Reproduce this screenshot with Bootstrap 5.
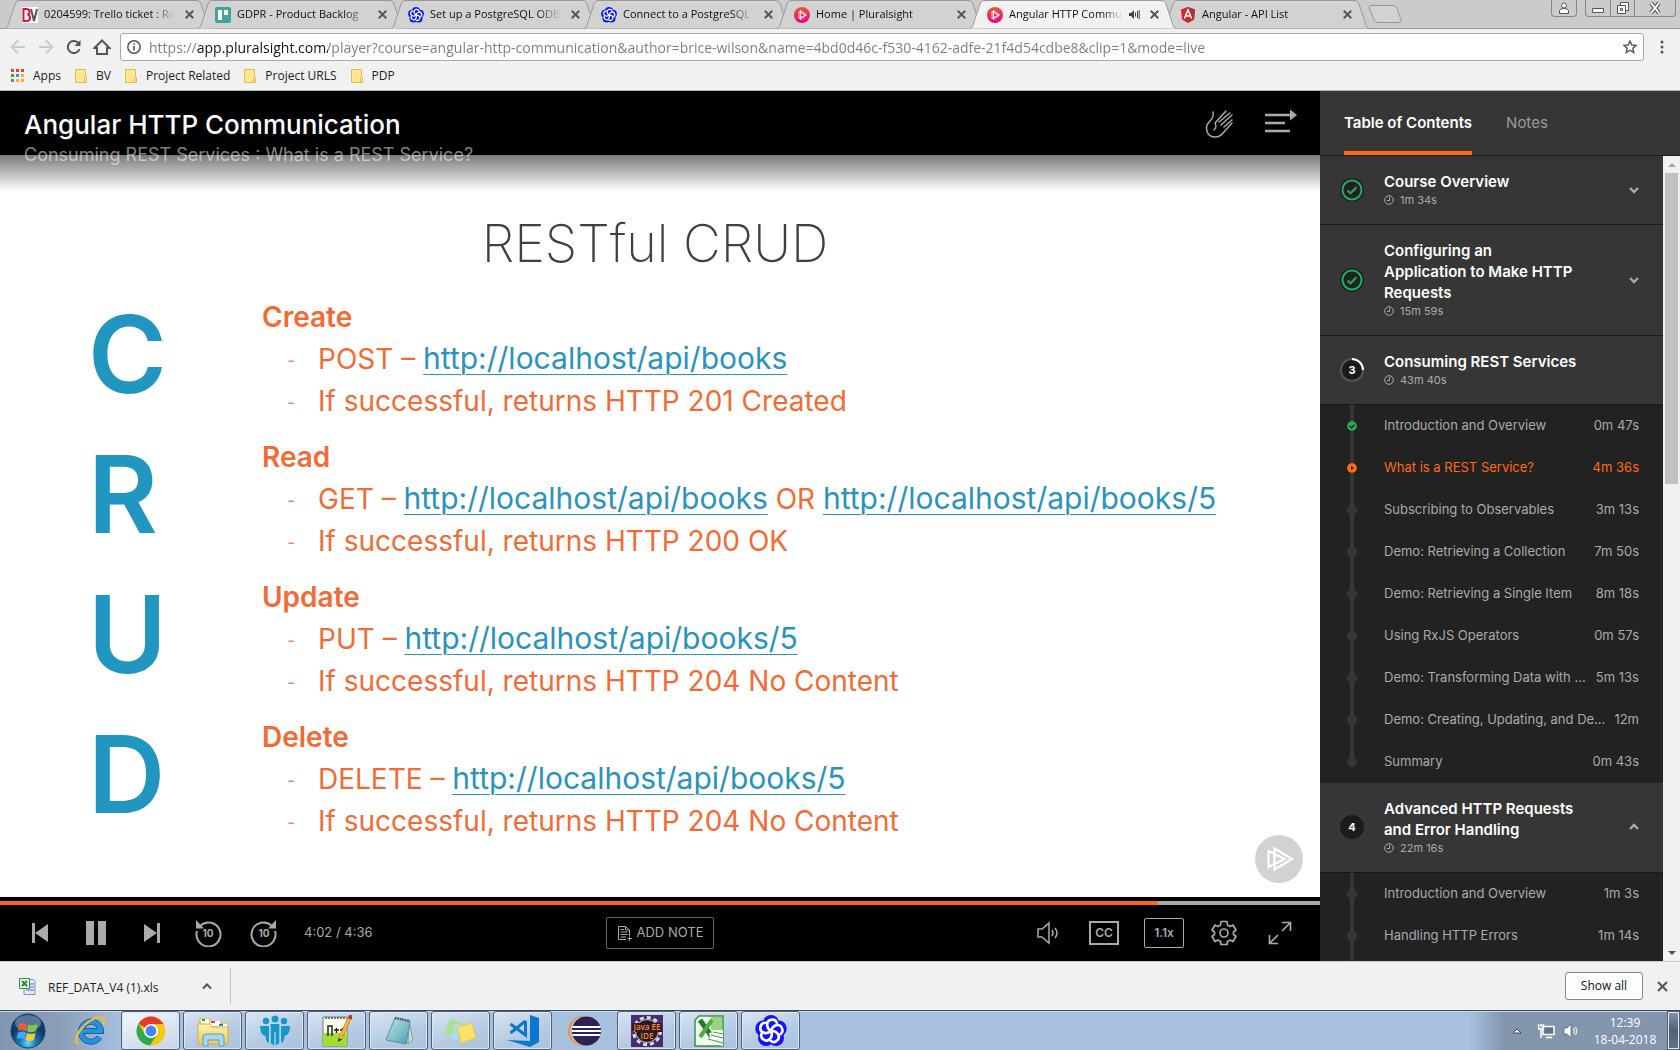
<!DOCTYPE html>
<html lang="en">
<head>
<meta charset="utf-8">
<meta name="viewport" content="width=device-width, initial-scale=1">
<title>Angular HTTP Communication</title>
<link href="https://cdn.jsdelivr.net/npm/bootstrap@5.3.0/dist/css/bootstrap.min.css" rel="stylesheet">
<style>
body{font-family:Inter,"Open Sans",sans-serif;height:100vh;overflow:hidden;font-size:13px;color:#aaa;background:#f1f1f1}
button{background:none;border:0;padding:0;color:inherit;display:inline-flex;align-items:center;justify-content:center}
svg{display:block;flex:none}
.chrome-ui{font-family:"Open Sans","Noto Sans",sans-serif;font-size:12px;color:#222}
/* tab strip */
.tab-strip{height:29px;background:#cbcbcb;border-bottom:1px solid #999;padding-left:5px}
.browser-tab{width:206px;height:29px;margin-right:-13px;position:relative;padding:0 14px 0 17px;color:#111;text-decoration:none;gap:6px;font-size:11px}
.browser-tab>.tab-shape{position:absolute;left:0;top:0;width:100%;height:29px;fill:#d2d2d2;stroke:#999}
.browser-tab>*{position:relative}
.tab-current{z-index:2;margin-bottom:-1px}
.tab-current>.tab-shape{fill:#f1f1f1}
.tab-text{flex:1 1 0;white-space:nowrap;overflow:hidden;-webkit-mask-image:linear-gradient(90deg,#000 82%,transparent)}
.tab-x{width:16px;color:#555}
.win-btns{height:17px;border:1px solid #888;border-top:0;border-radius:0 0 4px 4px;color:#555}
.win-btns button{height:16px;width:24px}
.win-btns .win-close{width:41px}
.win-btns button+button{border-left:1px solid #888}
/* toolbar */
.tool-row{height:36px;padding:0 12px 0 4px;color:#555}
.tool-row>button{width:28px;height:28px}
.url-box{height:28px;background:#fff;border:1px solid #a9a9a9;border-radius:3px;padding:0 6px}
.url-box input{border:0;outline:0;padding:0;font-size:14px;min-width:0;line-height:24px;height:26px;color:transparent;background:linear-gradient(90deg,#7b7b7b 48px,#111 48px,#111 179px,#7b7b7b 179px);-webkit-background-clip:text;background-clip:text}
.bookmark-row{height:26px;border-bottom:1px solid #b6b6b6;padding-left:10px;gap:14px}
.bookmark-row a{color:#222;text-decoration:none;gap:9px}
/* player */
.player-head{height:64px;background:#000;padding:18px 22px 0 24px;z-index:3;position:relative}
.player-head h1{font-size:26px;font-weight:500;line-height:32px;color:#fff;margin:0}
.player-head p{font-size:18px;line-height:28px;color:rgba(255,255,255,.52);margin:0;white-space:nowrap}
.slide-area{background:linear-gradient(#7a7a7a,#fff 36px);overflow:hidden;padding:56px 24px 0 88px;color:#f26b35}
.slide-area h2{font-size:52px;font-weight:200;line-height:66px;color:#404040;margin:0 0 19px;padding-right:74px}
.crud-block{height:126px;margin-bottom:14px}
.crud-letter{width:174px;font-size:107px;font-weight:600;line-height:116px;color:#2196c1}
.crud-block h3,.crud-block li{font-size:28px;line-height:42px;margin:0;white-space:nowrap}
.crud-block h3{font-weight:600}
.crud-block li{display:flex;height:42px}
.crud-block li::before{content:"-";font-size:18px;width:31px;padding-top:2px;color:#e8905f}
.crud-block ul{list-style:none;margin:0;padding-left:25px}
.crud-block a{color:#2a93bb;font-size:30px;line-height:1;text-decoration-thickness:1px;text-underline-offset:5px}
.ps-badge{position:absolute;right:17px;bottom:14px}
.seek{height:8px;background:#000;padding-top:4px}
.seek>div{height:4px;background:#aaa}
.seek>div>div{height:4px;background:#f96816}
.ctl-bar{height:56px;background:#000;color:#aaa;padding:0 24px}
.ctl-bar .ctl{width:32px;height:32px}
.note-btn{height:32px;width:108px;border:1px solid #666;border-radius:2px;gap:4px;font-size:13px;white-space:nowrap}
.ctl-bar .speed{width:40px;height:30px;border:1px solid #aaa;border-radius:2px;font-size:12px}
.side-a,.side-b{flex:1 1 0}
/* contents panel */
.toc{width:360px;background:#363636}
.toc-tabs{height:65px;border-bottom:1px solid #191919;padding-left:24px;gap:34px;font-size:15px}
.toc-tabs a{line-height:63px;height:64px;color:#999;text-decoration:none}
.toc-tabs a.cur{color:#fff;font-weight:600;border-bottom:4px solid #ff6a13}
.toc-body{min-height:0}
.toc-list{overflow:hidden;min-width:0}
.module{padding:15px 24px 16px 20px;border-bottom:1px solid #191919;background:#363636;color:#aaa}
.module h4{font-size:15px;font-weight:600;line-height:21px;color:#fff;margin:0}
.module .dur{font-size:11px;line-height:16px;gap:6px}
.module .num{width:24px;height:24px;border-radius:50%;background:#1c1c1c;color:#fff;font-size:11px;font-weight:700;margin-right:20px}
.lessons{background:#222;list-style:none;margin:0;padding:0 24px 0 27px}
.lessons li{height:42px;gap:5px;background:linear-gradient(#363636,#363636) 3px 0/4px 100% no-repeat}
.lessons li.final{background-size:4px 50%}
.lessons .dot{width:10px;height:10px;border-radius:50%;background:#363636;flex:none;margin-right:22px}
.lessons a{color:#aaa;text-decoration:none;flex:1 1 0;min-width:0}
.lessons .now,.lessons .now a{color:#ff6a13}
.track{width:17px;background:#f1f1f1}
.track i{height:17px}
.thumb{height:311px;width:13px;background:#c1c1c1}
/* download shelf and taskbar */
.shelf{height:49px;border-top:1px solid #ccc;background:#f1f1f1;padding:0 10px 0 19px}
.shelf-file{width:212px;height:36px;border-right:1px solid #c4c4c4;padding-right:18px}
.show-all{width:78px;height:28px;border:1px solid #888;border-radius:3px;background:#fdfdfd;color:#111}
.task{height:40px;background:linear-gradient(90deg,#8396b1,#8b9eb9 58px,#a6c0dd 122px,#a6c0dd calc(100% - 210px),#8396ae calc(100% - 176px));border-top:1px solid #3d4a5c;box-shadow:inset 0 1px #c4d5e8;padding-left:6px;gap:3px}
.task button{width:59px;height:39px;border:1px solid #4f6078;border-radius:3px;background:linear-gradient(160deg,#d9e5f2,#b5cae2 60%,#aac2de);box-shadow:inset 0 0 0 1px #dbe7f4}
.task button.open-app{background:linear-gradient(160deg,#f4f8fc,#d6e2f0 60%,#c4d5e9)}
.task button.plain{background:none;border-color:transparent;box-shadow:none}
.task .orb{width:43px}.task .ie{width:66px;padding-left:10px}
.task .corner{width:13px;background:linear-gradient(#8796aa,#4f6075 50%,#63738a);border-radius:0}
.clock{color:#fff;font-size:12px;line-height:17px;width:84px}
</style>
</head>
<body class="d-flex flex-column">
<svg width="0" height="0" class="position-absolute" aria-hidden="true">
<defs>
<linearGradient id="gp" x1="0" y1="0" x2="0" y2="1"><stop offset="0" stop-color="#f05a28"/><stop offset="1" stop-color="#ec008c"/></linearGradient>
<linearGradient id="gf" x1="0" y1="0" x2="0" y2="1"><stop offset="0" stop-color="#fff3b0"/><stop offset="1" stop-color="#eec858"/></linearGradient>
<linearGradient id="gn" x1="0" y1="0" x2="1" y2="1"><stop offset="0" stop-color="#bfe6ee"/><stop offset="1" stop-color="#4f9fb2"/></linearGradient>
<radialGradient id="go" cx=".5" cy=".85"><stop offset="0" stop-color="#5fe3fb"/><stop offset=".45" stop-color="#1c7cba"/><stop offset="1" stop-color="#0f3c6e"/></radialGradient>
<symbol id="shape" viewBox="0 0 206 29" preserveAspectRatio="none"><path d="M0 28.500C3 27 3 25 4 22L10 4Q11 .5 14 .5H192Q195 .5 196 4L202 22C203 25 203 27 206 28.500"/></symbol>
<symbol id="x" viewBox="0 0 16 16"><path d="M4 4l8 8M12 4l-8 8" stroke="currentColor" stroke-width="2"/></symbol>
<symbol id="knot" viewBox="0 0 32 32"><g fill="#1414f5"><circle cx="16" cy="8" r="8"/><circle cx="8.300" cy="13.500" r="8"/><circle cx="23.700" cy="13.500" r="8"/><circle cx="11" cy="23" r="8"/><circle cx="21" cy="23" r="8"/></g><g fill="none" stroke="#fff" stroke-width="2.600" stroke-linecap="round"><path id="kp" d="M16 16c-5-3-5-9-1-11 4-1 6 0 7 3"/><use href="#kp" transform="rotate(72 16 16)"/><use href="#kp" transform="rotate(144 16 16)"/><use href="#kp" transform="rotate(216 16 16)"/><use href="#kp" transform="rotate(288 16 16)"/></g></symbol>
<symbol id="ps" viewBox="0 0 16 16"><circle cx="8" cy="8" r="8" fill="url(#gp)"/><path d="M5 4.500v7l6.500-3.500zM6.500 3.500v9l6-4.500z" fill="none" stroke="#fff" stroke-width=".9"/></symbol>
<symbol id="folder" viewBox="0 0 12 14"><path d="M.5.5h10v8h1v5H.5z" fill="#ffe695" stroke="#e3bd4e"/><path d="M9.500 9v4.500" stroke="#e3bd4e"/></symbol>
<symbol id="clk" viewBox="0 0 10 10"><circle cx="5" cy="5" r="4.300" fill="none" stroke="currentColor"/><path d="M5.500 2v3.500H3" fill="none" stroke="currentColor"/></symbol>
<symbol id="done" viewBox="0 0 24 24"><circle cx="12" cy="12" r="12" fill="#222"/><circle cx="12" cy="12" r="9.500" fill="none" stroke="#23aa5a" stroke-width="2"/><path d="M7.500 12.500l3 2.800 6-6" fill="none" stroke="#23aa5a" stroke-width="2"/></symbol>
<symbol id="dn" viewBox="0 0 10 10"><path d="M1 3L5 7 9 3" fill="none" stroke="#aaa" stroke-width="2.400"/></symbol>
<symbol id="rew" viewBox="0 0 28 28"><path d="M6.500 5.500A12 12 0 1 1 3 11" transform="translate(0 1)" fill="none" stroke="currentColor" stroke-width="2"/><path d="M2 1v8.500h8z" fill="currentColor"/></symbol>
</defs></svg>

<header class="chrome-ui flex-shrink-0">
<div class="tab-strip d-flex">
<a href="#" class="browser-tab d-flex align-items-center"><svg class="tab-shape"><use href="#shape"/></svg><svg width="16" height="16" viewBox="0 0 16 16"><path fill="#fff" d="M0 0h16v16H0z"/><path d="M1.500 2h3q3 0 3 3 0 2-2 2.500Q8 8 8 11q0 3-3.500 3h-3z" fill="none" stroke="#d8143c" stroke-width="2"/><path d="M9 2l3 12 3-12" fill="none" stroke="#555" stroke-width="2"/></svg><span class="tab-text">0204599: Trello ticket : Re</span><button class="tab-x" aria-label="Close tab"><svg width="15" height="15"><use href="#x"/></svg></button></a>
<a href="#" class="browser-tab d-flex align-items-center"><svg class="tab-shape"><use href="#shape"/></svg><svg width="16" height="16" viewBox="0 0 16 16"><rect width="16" height="16" rx="2" fill="#3fa598"/><path d="M3 3h4v10H3zM9 3h4v5H9z" fill="#fff"/></svg><span class="tab-text">GDPR - Product Backlog</span><button class="tab-x" aria-label="Close tab"><svg width="15" height="15"><use href="#x"/></svg></button></a>
<a href="#" class="browser-tab d-flex align-items-center"><svg class="tab-shape"><use href="#shape"/></svg><svg width="16" height="16"><use href="#knot"/></svg><span class="tab-text">Set up a PostgreSQL ODB</span><button class="tab-x" aria-label="Close tab"><svg width="15" height="15"><use href="#x"/></svg></button></a>
<a href="#" class="browser-tab d-flex align-items-center"><svg class="tab-shape"><use href="#shape"/></svg><svg width="16" height="16"><use href="#knot"/></svg><span class="tab-text">Connect to a PostgreSQL</span><button class="tab-x" aria-label="Close tab"><svg width="15" height="15"><use href="#x"/></svg></button></a>
<a href="#" class="browser-tab d-flex align-items-center"><svg class="tab-shape"><use href="#shape"/></svg><svg width="16" height="16"><use href="#ps"/></svg><span class="tab-text">Home | Pluralsight</span><button class="tab-x" aria-label="Close tab"><svg width="15" height="15"><use href="#x"/></svg></button></a>
<a href="#" class="browser-tab tab-current d-flex align-items-center"><svg class="tab-shape"><use href="#shape"/></svg><svg width="16" height="16"><use href="#ps"/></svg><span class="tab-text">Angular HTTP Commu</span><svg width="11" height="11" viewBox="0 0 11 11"><path d="M0 4h2l3-3v9L2 7H0z" fill="#444"/><path d="M6.500 3.500v4M8.500 2v7M10.200 1v9" stroke="#444" fill="none"/></svg><button class="tab-x" aria-label="Close tab"><svg width="15" height="15"><use href="#x"/></svg></button></a>
<a href="#" class="browser-tab d-flex align-items-center"><svg class="tab-shape"><use href="#shape"/></svg><svg width="16" height="16" viewBox="0 0 16 16"><path d="M8 0l7 2.500-1 10L8 16l-6-3.500-1-10z" fill="#d4232c"/><path d="M8 0l7 2.500-1 10L8 16z" fill="#b52e31"/><path d="M4.300 11.500L8 3l3.700 8.500M6 9h4" fill="none" stroke="#fff" stroke-width="1.500"/></svg><span class="tab-text">Angular - API List</span><button class="tab-x" aria-label="Close tab"><svg width="15" height="15"><use href="#x"/></svg></button></a>
<button class="align-self-center ms-2 ps-1" aria-label="New tab"><svg width="35" height="18" viewBox="0 0 35 18"><path d="M3 .5h22q3 0 4 3l4 11q.5 3-2 3H10q-3 0-4-3l-5-12q0-2 2-2z" fill="#d2d2d2" stroke="#999"/></svg></button>
<div class="ms-auto me-1 d-flex align-items-start gap-2">
<div class="win-btns d-flex"><button aria-label="Profile"><svg width="10" height="12" viewBox="0 0 10 12"><circle cx="5" cy="3.500" r="2.500" fill="#fff" stroke="#555"/><path d="M.5 11.500v-3Q1 6.500 5 6.500t4.500 2v3z" fill="#fff" stroke="#555"/></svg></button></div>
<div class="win-btns d-flex"><button aria-label="Minimise"><svg width="12" height="12" viewBox="0 0 12 12"><path d="M.5 6.500h11v4H.5z" fill="#fff" stroke="#555"/></svg></button><button aria-label="Restore"><svg width="12" height="12" viewBox="0 0 12 12"><path d="M3.500.5h8v8h-8z" fill="#fff" stroke="#555"/><path d="M.5 3.500h8v8h-8z" fill="#fff" stroke="#555"/><path d="M3.500 6.500h2v2h-2z" fill="none" stroke="#555"/></svg></button><button class="win-close" aria-label="Close"><svg width="12" height="12" viewBox="0 0 12 12"><path d="M2 1l8 10M10 1L2 11" stroke="#555" stroke-width="4"/><path d="M2 1l8 10M10 1L2 11" stroke="#fff" stroke-width="2"/></svg></button></div>
</div>
</div>
<div class="tool-row d-flex align-items-center">
<button aria-label="Back"><svg width="16" height="16" viewBox="0 0 16 16" fill="none" stroke="#ccc" stroke-width="2"><path d="M15 8H2M8 1.500L1.500 8 8 14.500"/></svg></button>
<button aria-label="Forward"><svg width="16" height="16" viewBox="0 0 16 16" fill="none" stroke="#ccc" stroke-width="2"><path d="M1 8h13M8 1.500L14.500 8 8 14.500"/></svg></button>
<button aria-label="Reload"><svg width="16" height="16" viewBox="0 0 16 16"><path d="M13.500 10A6 6 0 1 1 12 3.800" fill="none" stroke="#555" stroke-width="2"/><path d="M14.500 1v6h-6z" fill="#555"/></svg></button>
<button aria-label="Home"><svg width="18" height="16" viewBox="0 0 18 16"><path d="M1.500 9L9 1.500 16.500 9H14v6H4V9z" fill="none" stroke="#555" stroke-width="2"/></svg></button>
<div class="url-box d-flex align-items-center flex-grow-1 gap-2 mx-1">
<svg width="14" height="14" viewBox="0 0 14 14"><circle cx="7" cy="7" r="6.200" fill="none" stroke="#555" stroke-width="1.500"/><path d="M7 6v4.500M7 3.200v1.600" stroke="#555" stroke-width="1.600"/></svg>
<input class="flex-grow-1" type="text" aria-label="Address" value="https://app.pluralsight.com/player?course=angular-http-communication&amp;author=brice-wilson&amp;name=4bd0d46c-f530-4162-adfe-21f4d54cdbe8&amp;clip=1&amp;mode=live">
<svg width="14" height="14" viewBox="0 0 14 14"><path d="M7 1l1.800 4 4.200.4-3.200 2.800 1 4.300L7 10.200l-3.800 2.300 1-4.300L1 5.400 5.200 5z" fill="none" stroke="#555" stroke-width="1.400"/></svg>
</div>
<button class="w-auto ms-2 px-1" aria-label="Menu"><svg width="4" height="14" viewBox="0 0 4 14" fill="#555"><circle cx="2" cy="2" r="1.500"/><circle cx="2" cy="7" r="1.500"/><circle cx="2" cy="12" r="1.500"/></svg></button>
</div>
<nav class="bookmark-row d-flex pb-1" aria-label="Bookmarks">
<a href="#" class="d-flex align-items-center"><svg width="14" height="14" viewBox="0 0 14 14"><path d="M1 0h3v3H1zM6 0h3v3H6zM11 0h3v3h-3z" fill="#ea4335"/><path d="M1 5h3v3H1zM1 10h3v3H1z" fill="#34a853"/><path d="M6 5h3v3H6z" fill="#4285f4"/><path d="M11 5h3v3h-3zM6 10h3v3H6zM11 10h3v3h-3z" fill="#fbae16"/></svg>Apps</a>
<a href="#" class="d-flex align-items-center"><svg width="12" height="14"><use href="#folder"/></svg>BV</a>
<a href="#" class="d-flex align-items-center"><svg width="12" height="14"><use href="#folder"/></svg>Project Related</a>
<a href="#" class="d-flex align-items-center"><svg width="12" height="14"><use href="#folder"/></svg>Project URLS</a>
<a href="#" class="d-flex align-items-center"><svg width="12" height="14"><use href="#folder"/></svg>PDP</a>
</nav>
</header>

<div class="toc-body d-flex flex-grow-1">
<main class="d-flex flex-column flex-grow-1">
<div class="player-head d-flex justify-content-between flex-shrink-0">
<div><h1>Angular HTTP Communication</h1><p>Consuming REST Services : What is a REST Service?</p></div>
<div class="d-flex gap-4 align-items-start">
<button class="me-1" aria-label="Raise hand"><svg width="32" height="30" viewBox="0 0 32 30" fill="none" stroke="#aaa" stroke-width="1.500" stroke-linecap="round" stroke-linejoin="round"><path d="M9 3c1 5-1 7-4 10-5 6-2 15 6 15 4 0 6-1 9-5l8-9M10 21c3-3 2-5 1-7L22 2M15 13L26 4M17 16L28 6M20 18l8-7"/></svg></button>
<button aria-label="Hide panel"><svg width="34" height="24" viewBox="0 0 34 24"><path d="M1 6h28M1 14h20M1 22h25" stroke="#aaa" stroke-width="2.500"/><path d="M26 .5l7 5.500-7 5.500z" fill="#aaa"/></svg></button>
</div>
</div>
<section class="slide-area flex-grow-1 position-relative">
<h2 class="text-center">RESTful CRUD</h2>
<div class="crud-block d-flex"><div class="crud-letter">C</div><div><h3>Create</h3><ul><li><span>POST – <a href="#">http://localhost/api/books</a></span></li><li><span>If successful, returns HTTP 201 Created</span></li></ul></div></div>
<div class="crud-block d-flex"><div class="crud-letter">R</div><div><h3>Read</h3><ul><li><span>GET – <a href="#">http://localhost/api/books</a> OR <a href="#">http://localhost/api/books/5</a></span></li><li><span>If successful, returns HTTP 200 OK</span></li></ul></div></div>
<div class="crud-block d-flex"><div class="crud-letter">U</div><div><h3>Update</h3><ul><li><span>PUT – <a href="#">http://localhost/api/books/5</a></span></li><li><span>If successful, returns HTTP 204 No Content</span></li></ul></div></div>
<div class="crud-block d-flex"><div class="crud-letter">D</div><div><h3>Delete</h3><ul><li><span>DELETE – <a href="#">http://localhost/api/books/5</a></span></li><li><span>If successful, returns HTTP 204 No Content</span></li></ul></div></div>
<svg class="ps-badge" width="48" height="48" viewBox="0 0 48 48"><circle cx="24" cy="24" r="24" fill="#d2d2d2"/><path d="M13.500 16v16l16-8zM19.500 13.500v21L37 24z" fill="none" stroke="#fff" stroke-width="2.200"/></svg>
</section>
<div class="seek flex-shrink-0"><div><div style="width:87.7%"></div></div></div>
<div class="ctl-bar d-flex align-items-center flex-shrink-0">
<div class="side-a d-flex align-items-center gap-4">
<button class="ctl" aria-label="Previous"><svg width="16" height="20" viewBox="0 0 16 20" fill="#aaa"><path d="M0 0h3v20H0zM16 1v18L3 10z"/></svg></button>
<button class="ctl" aria-label="Pause"><svg width="20" height="24" viewBox="0 0 20 24" fill="#aaa"><path d="M0 0h8v24H0zM12 0h8v24h-8z"/></svg></button>
<button class="ctl" aria-label="Next"><svg width="16" height="20" viewBox="0 0 16 20" fill="#aaa"><path d="M13 0h3v20h-3zM0 1v18l13-9z"/></svg></button>
<button class="ctl" aria-label="Back 10 seconds"><svg width="28" height="28" viewBox="0 0 28 28" color="#aaa"><use href="#rew"/><text x="14" y="18" font-size="10" font-weight="700" fill="#aaa" text-anchor="middle">10</text></svg></button>
<button class="ctl" aria-label="Forward 10 seconds"><svg width="28" height="28" viewBox="0 0 28 28" color="#aaa"><use href="#rew" transform="translate(28) scale(-1 1)"/><text x="14" y="18" font-size="10" font-weight="700" fill="#aaa" text-anchor="middle">10</text></svg></button>
<span>4:02 / 4:36</span>
</div>
<button class="note-btn"><svg width="16" height="16" viewBox="0 0 16 16" fill="none" stroke="#aaa"><path d="M9 14.500H1.500v-13h7l4 3.500v6M8.500 1.500V5h4M3.500 4.500H7M3.500 7h7M3.500 9.500h7M3.500 12H9M12.500 11.500v4.500M10.500 13.500H15"/></svg>ADD NOTE</button>
<div class="side-b d-flex align-items-center justify-content-end gap-4">
<button class="ctl" aria-label="Volume"><svg width="24" height="24" viewBox="0 0 24 24" fill="none" stroke="#aaa" stroke-width="1.500"><path d="M2 8h4l7-6v20l-7-6H2zM16 9q2 3 0 6M19 7q4 5 0 10"/></svg></button>
<button class="ctl" aria-label="Captions"><svg width="30" height="24" viewBox="0 0 30 24"><rect x="1" y="1" width="28" height="22" fill="none" stroke="#aaa" stroke-width="2"/><text x="15" y="16" font-size="12" font-weight="600" fill="#aaa" text-anchor="middle">CC</text></svg></button>
<button class="speed fw-semibold" aria-label="Speed">1.1x</button>
<button class="ctl" aria-label="Settings"><svg width="26" height="26" viewBox="0 0 26 26" fill="none" stroke="#aaa" stroke-width="1.700" stroke-linejoin="round"><path d="M10 1.500h6l.5 3.500 2.500 1.500 3-1.500 3 5-2.500 2v2.500l2.500 2-3 5-3-1.500-2.500 1.500-.5 3h-6l-.5-3L7 20l-3 1.500-3-5 2.500-2V12L1 10l3-5 3 1.500L9.500 5z"/><circle cx="13" cy="13" r="4"/></svg></button>
<button class="ctl" aria-label="Full screen"><svg width="24" height="24" viewBox="0 0 24 24" fill="none" stroke="#aaa" stroke-width="1.700"><path d="M14 1.500h8.500V10M22 2l-8 8M10 22.500H1.500V14M2 22l8-8"/></svg></button>
</div>
</div>
</main>

<aside class="toc d-flex flex-column flex-shrink-0">
<nav class="toc-tabs d-flex flex-shrink-0"><a href="#" class="cur">Table of Contents</a><a href="#">Notes</a></nav>
<div class="toc-body d-flex flex-grow-1">
<div class="toc-list flex-grow-1">
<div class="module d-flex align-items-center"><svg class="me-3" width="24" height="24"><use href="#done"/></svg><div class="flex-grow-1 ps-1"><h4>Course Overview</h4><div class="dur d-flex align-items-center"><svg width="10" height="10"><use href="#clk"/></svg>1m 34s</div></div><button aria-label="Expand"><svg width="10" height="10"><use href="#dn"/></svg></button></div>
<div class="module d-flex align-items-center"><svg class="me-3" width="24" height="24"><use href="#done"/></svg><div class="flex-grow-1 ps-1"><h4>Configuring an<br>Application to Make HTTP<br>Requests</h4><div class="dur d-flex align-items-center"><svg width="10" height="10"><use href="#clk"/></svg>15m 59s</div></div><button aria-label="Expand"><svg width="10" height="10"><use href="#dn"/></svg></button></div>
<div class="module d-flex align-items-center"><svg class="me-3" width="24" height="24" viewBox="0 0 24 24"><circle cx="12" cy="12" r="11" fill="#1a1a1a" stroke="#555" stroke-width="2"/><path d="M12 1a11 11 0 0 1 11 11" fill="none" stroke="#fff" stroke-width="2"/><text x="12" y="16" font-size="11" font-weight="700" fill="#fff" text-anchor="middle">3</text></svg><div class="ps-1"><h4>Consuming REST Services</h4><div class="dur d-flex align-items-center"><svg width="10" height="10"><use href="#clk"/></svg>43m 40s</div></div></div>
<ul class="lessons">
<li class="d-flex align-items-center"><svg width="10" height="10" viewBox="0 0 10 10" class="dot"><circle cx="5" cy="5" r="5" fill="#23aa5a"/><path d="M2.500 5l2 1.800 3-3" fill="none" stroke="#222" stroke-width="1.400"/></svg><a href="#" class="text-truncate">Introduction and Overview</a><span>0m 47s</span></li>
<li class="d-flex align-items-center now"><svg width="10" height="10" viewBox="0 0 10 10" class="dot"><circle cx="5" cy="5" r="5" fill="#ff6a13"/><path d="M4 3v4l3-2z" fill="#222"/></svg><a href="#" class="text-truncate">What is a REST Service?</a><span>4m 36s</span></li>
<li class="d-flex align-items-center"><i class="dot"></i><a href="#" class="text-truncate">Subscribing to Observables</a><span>3m 13s</span></li>
<li class="d-flex align-items-center"><i class="dot"></i><a href="#" class="text-truncate">Demo: Retrieving a Collection</a><span>7m 50s</span></li>
<li class="d-flex align-items-center"><i class="dot"></i><a href="#" class="text-truncate">Demo: Retrieving a Single Item</a><span>8m 18s</span></li>
<li class="d-flex align-items-center"><i class="dot"></i><a href="#" class="text-truncate">Using RxJS Operators</a><span>0m 57s</span></li>
<li class="d-flex align-items-center"><i class="dot"></i><a href="#" class="text-truncate">Demo: Transforming Data with ...</a><span>5m 13s</span></li>
<li class="d-flex align-items-center"><i class="dot"></i><a href="#" class="text-truncate">Demo: Creating, Updating, and De...</a><span>12m</span></li>
<li class="d-flex align-items-center final"><i class="dot"></i><a href="#" class="text-truncate">Summary</a><span>0m 43s</span></li>
</ul>
<div class="module d-flex align-items-center"><div class="num d-flex align-items-center justify-content-center">4</div><div class="flex-grow-1"><h4>Advanced HTTP Requests<br>and Error Handling</h4><div class="dur d-flex align-items-center"><svg width="10" height="10"><use href="#clk"/></svg>22m 16s</div></div><button aria-label="Collapse"><svg width="10" height="10" viewBox="0 0 10 10"><path d="M1 7L5 3 9 7" fill="none" stroke="#aaa" stroke-width="2.400"/></svg></button></div>
<ul class="lessons">
<li class="d-flex align-items-center"><i class="dot"></i><a href="#" class="text-truncate">Introduction and Overview</a><span>1m 3s</span></li>
<li class="d-flex align-items-center"><i class="dot"></i><a href="#" class="text-truncate">Handling HTTP Errors</a><span>1m 14s</span></li>
<li></li>
</ul>
</div>
<div class="track d-flex flex-column align-items-center flex-shrink-0"><i class="d-flex align-items-center"><svg width="8" height="4" viewBox="0 0 8 4"><path d="M0 4l4-4 4 4z" fill="#a3a3a3"/></svg></i><div class="thumb"></div><i class="d-flex align-items-center mt-auto"><svg width="8" height="4" viewBox="0 0 8 4"><path d="M0 0l4 4 4-4z" fill="#505050"/></svg></i></div>
</div>
</aside>
</div>

<footer class="chrome-ui flex-shrink-0">
<div class="shelf d-flex align-items-center">
<div class="shelf-file d-flex align-items-center"><svg width="17" height="17" viewBox="0 0 17 17"><path d="M5 1.500h9l2 2v13H5z" fill="#dfeafa" stroke="#7b94bd"/><path d="M10 6h5M10 9h5M7 12h8" stroke="#4d74b5"/><path d="M.5.500h10v10H.5z" fill="#e6f3e6" stroke="#3b8b40"/><path d="M3 3l5 5M8 3L3 8" stroke="#2c8a34" stroke-width="2"/></svg><span class="ms-2 ps-1 pt-1">REF_DATA_V4 (1).xls</span><button class="ms-auto" aria-label="File menu"><svg width="10" height="8" viewBox="0 0 10 8"><path d="M1 6.500l4-4 4 4" fill="none" stroke="#555" stroke-width="2"/></svg></button></div>
<button class="show-all ms-auto me-2">Show all</button><button class="ms-1" aria-label="Close downloads"><svg width="15" height="15" viewBox="0 0 15 15"><path d="M3 3l9 9M12 3l-9 9" stroke="#555" stroke-width="2"/></svg></button>
</div>
<div class="task d-flex align-items-center">
<button class="plain orb" aria-label="Start"><svg width="36" height="36" viewBox="0 0 36 36"><circle cx="18" cy="18" r="17" fill="url(#go)" stroke="#20405e"/><ellipse cx="18" cy="10" rx="13" ry="8" fill="#fff" opacity=".3"/><path d="M9 11q4-2 8 0l-1 7q-4-2-8 0z" fill="#ef5a28"/><path d="M18.500 11.500q4 2 9-.5l-1.500 7q-4 2-8.500.5z" fill="#8cc63f"/><path d="M8 19.500q4-2 8 0l-1 7q-4-2-8.500-.500z" fill="#3fa9f5"/><path d="M17 20q4 2 8.500 0l-1.500 7q-4 2-8.500 0z" fill="#fcc736"/></svg></button>
<button class="plain ie" aria-label="Internet Explorer"><svg width="32" height="32" viewBox="0 0 32 32"><path d="M25.500 22a10 10 0 1 1 1.500-6H9" fill="none" stroke="#12518f" stroke-width="6"/><path d="M25.500 22a10 10 0 1 1 1.500-6H9" fill="none" stroke="#2493e0" stroke-width="4.500"/><path d="M5 29C-5 26 12 3 26 2c5 0 5 4 3 8" fill="none" stroke="#f5bd2a" stroke-width="2.200"/></svg></button>
<button class="open-app" aria-label="Chrome"><svg width="30" height="30" viewBox="0 0 30 30"><circle cx="15" cy="15" r="14.500" fill="#fbc516"/><path d="M15 15L2.500 7.700A14.500 14.500 0 0 1 27.600 8H15z" fill="#e33b2e"/><path d="M15 15l-6 3.500L2.500 7.700A14.500 14.500 0 0 0 14 29.500L21 18.500z" fill="#2da94f"/><circle cx="15" cy="15" r="7" fill="#fff"/><circle cx="15" cy="15" r="5.400" fill="#4285f4"/></svg></button>
<button aria-label="Explorer"><svg width="32" height="32" viewBox="0 0 32 32"><path d="M2 4q0-1 1-1h10l1 3h10l1 2h6v19H2z" fill="#e9c45b"/><path d="M4 4h8v5H4zM13 6h10v5H13zM21 9h9v4h-9z" fill="#fff"/><path d="M5 4h3v2H5z" fill="#2a9d3a"/><path d="M14 6h4v2h-4z" fill="#d43"/><path d="M22 9h4v2h-4z" fill="#2a7fd4"/><path d="M1 9h12l2 3h16v17H1z" fill="url(#gf)" stroke="#d5ae45"/><path d="M6 31v-9q0-3 3-3h15q3 0 3 3v9h-5v-6H11v6z" fill="#a9d8f0" stroke="#5c9cc8"/></svg></button>
<button aria-label="Team app"><svg width="32" height="32" viewBox="0 0 32 32"><g fill="#1796c8"><circle cx="7" cy="6" r="3.200"/><circle cx="16" cy="4" r="3.500"/><circle cx="25" cy="6" r="3.200"/><path d="M1 11h9.500v17q-4-1-4-7Q1 20 1 11zM11.500 9h9v19l-4.500 3-4.500-3zM21.500 11H31q0 9-5.500 10 0 6-4 7z"/></g><path d="M16 17v14M10.800 11v17M21.200 11v17" stroke="#dfeaf5"/></svg></button>
<button aria-label="Notepad++"><svg width="30" height="32" viewBox="0 0 30 32"><path d="M1 2h24v29H1z" fill="#fafff0" stroke="#777"/><path d="M1 18h24v13H1z" fill="#a2dd30"/><path d="M3 3h20" stroke="#777" stroke-width="2" stroke-dasharray="2 1"/><path d="M6 21v-10h4v10M12 15h5M14.500 13v5M18 15h5M20.500 13v5" fill="none" stroke="#222" stroke-width="1.500"/><path d="M28 2L18 24" stroke="#c77d10" stroke-width="4"/><path d="M28 2L18 24" stroke="#f9b83c" stroke-width="2.500"/><path d="M29 0l-1 4" stroke="#b43c34" stroke-width="4"/><path d="M16 27l.5-4 3.500 1.500z" fill="#333"/></svg></button>
<button aria-label="Notepad"><svg width="30" height="32" viewBox="0 0 30 32"><path d="M25 6l4 19-5 4z" fill="#c9d6dc" stroke="#899"/><path d="M11 3l15 3-4 23L2 25z" fill="url(#gn)" stroke="#5990a0"/><path d="M11 3l15 3" stroke="#556" stroke-width="2.500" stroke-dasharray="1.500 1"/></svg></button>
<button aria-label="Sticky Notes"><svg width="34" height="32" viewBox="0 0 34 32"><path d="M6 4l13 4-4 14L1 19z" fill="#a8e28c"/><path d="M10 9l10 0v15H8z" fill="#aedcf7"/><path d="M13 12l15-4 4 15-15 5z" fill="#fbe36b" stroke="#e4c64a"/></svg></button>
<button aria-label="VS Code"><svg width="32" height="32" viewBox="0 0 32 32"><path d="M23 0l9 3v24l-9 5L0 25l23 1z" fill="#0a79cb"/><path d="M18.500 6v14L3.500 9M3.500 18l15-12" fill="none" stroke="#0a79cb" stroke-width="3"/></svg></button>
<button class="plain" aria-label="Eclipse"><svg width="34" height="32" viewBox="0 0 34 32"><circle cx="15" cy="16" r="15" fill="#f7941e"/><circle cx="16.500" cy="16" r="14.500" fill="#a6c0dd"/><circle cx="18.500" cy="16" r="14.500" fill="#2c2255"/><path d="M4.500 12h28M4 16h29M4.500 20h28" stroke="#fff" stroke-width="2"/></svg></button>
<button aria-label="Java EE IDE"><svg width="32" height="32" viewBox="0 0 32 32" overflow="visible"><path d="M0 0h32v32H0z" fill="#4b2a70"/><circle cx="16" cy="16" r="13.500" fill="none" stroke="#ddd" stroke-width="3" stroke-dasharray="4 3"/><circle cx="16" cy="16" r="11.500" fill="#241a22" stroke="#ccc"/><path d="M1 8h30v9H1z" fill="#2b1c33"/><text x="16" y="15" font-size="8" font-weight="600" fill="#ff8a1c" text-anchor="middle">Java EE</text><text x="16" y="24" font-size="8" font-weight="600" fill="#ff8a1c" text-anchor="middle">IDE</text></svg></button>
<button aria-label="Excel"><svg width="30" height="32" viewBox="0 0 30 32"><path d="M5 1h24v30H1V5z" fill="#f2f9ee" stroke="#3a9440" stroke-width="1.500"/><path d="M17 2h11v13H17z" fill="#9dd089"/><path d="M6 5l12 17" stroke="#1f7a30" stroke-width="5"/><path d="M18 5L6 22" stroke="#4fae3e" stroke-width="4"/><path d="M15 18l14-3v16l-12-3z" fill="#fff"/><path d="M17 20l12 3M14 24l15 4M19 17l10 2" stroke="#46a04a" stroke-width="1.200"/></svg></button>
<button aria-label="Knot"><svg width="32" height="32"><use href="#knot"/></svg></button>
<div class="ms-auto d-flex align-items-center h-100">
<svg width="10" height="6" viewBox="0 0 10 6" class="me-3"><path d="M1 5l4-4 4 4z" fill="#fff" stroke="#445"/></svg>
<svg width="17" height="16" viewBox="0 0 17 16" class="me-2"><path d="M5 3.500h11v8H5zM8 14.500h6" fill="#5d7590" stroke="#fff" stroke-width="1.500"/><path d="M3 7v8M.5 1v5h5V1M3 1v3" fill="none" stroke="#fff" stroke-width="1.500"/></svg>
<svg width="16" height="16" viewBox="0 0 16 16"><path d="M1 5h3l4-4v14l-4-4H1z" fill="#fff" stroke="#445" stroke-width=".6"/><path d="M10.500 5q2 3 0 6M12.500 4q3 4 0 8" fill="none" stroke="#fff"/></svg>
<div class="clock text-center ms-1">12:39<br>18-04-2018</div>
<button class="corner" aria-label="Show desktop"></button>
</div>
</div>
</footer>
<script src="https://cdn.jsdelivr.net/npm/bootstrap@5.3.0/dist/js/bootstrap.bundle.min.js"></script>
</body>
</html>
